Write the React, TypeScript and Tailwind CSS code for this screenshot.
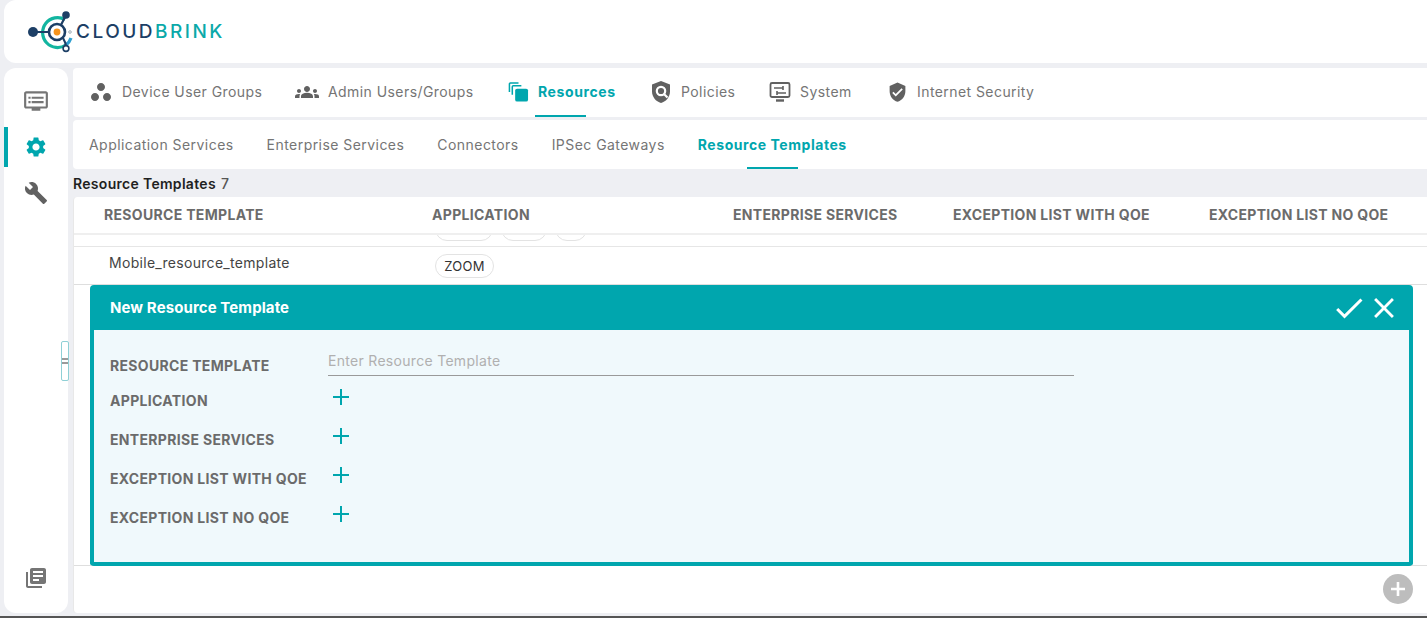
import { MdBuild, MdClose, MdCheck, MdDvr, MdGroups, MdLibraryBooks, MdSettings, MdVerifiedUser, MdWorkspaces } from 'react-icons/md'

const TEAL = '#00a6ae'

function ResourcesIcon() {
  return (
    <svg width="22" height="22" viewBox="0 0 22 22" fill="none" stroke={TEAL} strokeWidth="1.6">
      <path d="M1.5 11V2.500a1 1 0 0 1 1-1H11" />
      <path d="M4.500 14V5.500a1 1 0 0 1 1-1H14" />
      <rect x="7.500" y="7.500" width="13.500" height="13.500" rx="2" fill={TEAL} stroke="none" />
    </svg>
  )
}

function PolicyIcon() {
  return (
    <svg width="20" height="24" viewBox="0 0 20 24">
      <path fill="#616161" d="M10 1 1 4.500v7c0 5.400 3.800 10 9 11.500 5.200-1.500 9-6.100 9-11.500v-7L10 1z" />
      <circle cx="10" cy="11" r="4.200" fill="none" stroke="#fff" strokeWidth="2.200" />
      <path d="m13 14 3.500 3.500" stroke="#fff" strokeWidth="2.200" />
    </svg>
  )
}

function SystemIcon() {
  return (
    <svg width="22" height="22" viewBox="0 0 22 22" fill="none">
      <rect x="1.500" y="2" width="19" height="14" rx="1.500" stroke="#616161" strokeWidth="1.800" />
      <path d="M7 19.500h8" stroke="#616161" strokeWidth="2.400" />
      <path d="M5 7h9M14 5v4M8 12h9M8 10v4" stroke="#616161" strokeWidth="1.600" />
    </svg>
  )
}

function Logo() {
  return (
    <div className="flex items-center">
      <svg width="48" height="44" viewBox="0 0 48 44" fill="none">
        <path d="M37 9.500A15 15 0 1 0 38 35" stroke="#12b5a0" strokeWidth="3.200" />
        <path d="M38 35a15 15 0 0 0 5-7" stroke="#2f9fd0" strokeWidth="3.200" />
        <circle cx="29" cy="22" r="8" stroke="#1d3f66" strokeWidth="2.600" />
        <circle cx="29" cy="22" r="3.400" fill="#f7941d" />
        <path d="M5 22h16M33 15l5-10M35 28c2 3 3 6 3 10" stroke="#1d3f66" strokeWidth="2.200" />
        <circle cx="5" cy="22" r="5" fill="#1d3f66" />
        <circle cx="38" cy="5" r="3.800" fill="#1d3f66" />
        <circle cx="38" cy="38.500" r="2.900" fill="#fff" stroke="#1d3f66" strokeWidth="1.600" />
        <circle cx="42" cy="22" r="1.300" fill="#fff" stroke="#8a9aa8" strokeWidth="0.800" />
      </svg>
      <span className="text-[19px] font-medium tracking-[2.5px] leading-none text-[#1d3f66] font-['Inter',sans-serif]">
        CLOUD<span className="text-[#0ba9a9]">BRINK</span>
      </span>
    </div>
  )
}

const mainTabs = [
  { label: 'Device User Groups', icon: <MdWorkspaces size={24} color="#616161" />, cls: 'ml-[16px] w-[206px]', iconCls: 'w-[24px]' },
  { label: 'Admin Users/Groups', icon: <MdGroups size={26} color="#616161" />, cls: 'w-[213px]', iconCls: 'w-[24px]' },
  { label: 'Resources', icon: <ResourcesIcon />, active: true, cls: 'w-[142px]', iconCls: 'w-[21px]' },
  { label: 'Policies', icon: <PolicyIcon />, cls: 'w-[118px]', iconCls: 'w-[22px]' },
  { label: 'System', icon: <SystemIcon />, cls: 'w-[119px]', iconCls: 'w-[23px]' },
  { label: 'Internet Security', icon: <MdVerifiedUser size={22} color="#616161" />, cls: 'w-[170px]', iconCls: 'w-[21px]' },
]

const subTabs = [
  { label: 'Application Services' },
  { label: 'Enterprise Services' },
  { label: 'Connectors' },
  { label: 'IPSec Gateways' },
  { label: 'Resource Templates', active: true },
]

const gridCls = 'grid grid-cols-[328px_301px_220px_256px_1fr] pl-[30px]'
const formRows = ['APPLICATION', 'ENTERPRISE SERVICES', 'EXCEPTION LIST WITH QOE', 'EXCEPTION LIST NO QOE']

function Chip({ children, w }: { children?: string; w: string }) {
  return (
    <span className={`flex h-6 items-center justify-center rounded-full border border-[#e3e3e3] bg-white pt-[2px] text-[13px] tracking-[0.3px] text-[#333] ${w}`}>
      {children}
    </span>
  )
}

export default function App() {
  return (
    <div className="relative flex h-[618px] w-[1427px] flex-col overflow-hidden bg-[#eeeff3] font-['Inter',sans-serif]">
      <header className="ml-1 flex h-[63px] shrink-0 items-center rounded-l-xl bg-white pl-[24px]">
        <Logo />
      </header>

      <div className="mt-[5px] flex h-[545px] shrink-0">
        <aside className="ml-1 flex w-[64px] flex-col items-center rounded-xl bg-white pt-[20px] pb-[23px]">
          <MdDvr size={26} color="#757575" />
          <div className="relative mt-[21px] flex w-full justify-center">
            <span className="absolute top-[-8px] left-0 h-[40px] w-[4px] bg-[#00a6ae]" />
            <MdSettings size={24} color={TEAL} />
          </div>
          <MdBuild size={24} color="#616161" className="mt-[22px]" />
          <MdLibraryBooks size={24} color="#757575" className="mt-auto" />
          <span className="absolute top-[341px] left-[61px] flex h-[40px] w-[8px] items-center rounded-[2px] border border-[#8fd0d6] bg-white">
            <span className="h-[6px] w-full border-y-2 border-[#9a9a9a]" />
          </span>
        </aside>

        <main className="ml-[5px] flex min-w-0 flex-1 flex-col">
          <nav className="flex h-[49px] shrink-0 rounded-l bg-white text-[14px] tracking-[0.43px] text-[#757575]">
            {mainTabs.map(t => (
              <div key={t.label} className={`relative flex items-center gap-[9px] pb-[2px] ${t.cls}`}>
                <span className={`flex shrink-0 justify-center ${t.iconCls}`}>{t.icon}</span>
                <span className={t.active ? 'font-bold tracking-[0.6px] text-[#00a6ae]' : ''}>{t.label}</span>
                {t.active && <span className="absolute bottom-0 left-[27px] h-[2px] w-[51px] bg-[#00a6ae]" />}
              </div>
            ))}
          </nav>

          <nav className="mt-[3px] flex h-[49px] shrink-0 items-center gap-[33px] rounded-l bg-white pl-[16px] text-[14px] tracking-[0.45px] text-[#757575]">
            {subTabs.map(t => (
              <div key={t.label} className="relative flex h-full items-center">
                <span className={t.active ? 'font-bold tracking-[0.55px] text-[#00a6ae]' : ''}>{t.label}</span>
                {t.active && <span className="absolute bottom-0 left-[49px] h-[2px] w-[51px] bg-[#00a6ae]" />}
              </div>
            ))}
          </nav>

          <div className="flex h-[28px] shrink-0 items-center text-[14px] font-semibold tracking-[0.3px] text-[#1f1f1f]">
            Resource Templates<span className="ml-[5px] font-medium text-[#555]">7</span>
          </div>

          <section className="flex min-h-0 flex-1 flex-col rounded-l border-l border-[#e8e8e8] bg-white">
            <div className={`${gridCls} h-[38px] shrink-0 items-center border-b-2 border-[#efefef] pb-[2px] text-[14px] font-bold tracking-[0.32px] text-[#6b6b6b]`}>
              <span>RESOURCE TEMPLATE</span>
              <span>APPLICATION</span>
              <span>ENTERPRISE SERVICES</span>
              <span>EXCEPTION LIST WITH QOE</span>
              <span>EXCEPTION LIST NO QOE</span>
            </div>

            <div className="flex h-[12px] shrink-0 items-end gap-[8px] overflow-hidden border-b border-[#e6e6e6] pl-[361px]">
              <Chip w="w-[58px] mb-[5px]" />
              <Chip w="w-[46px] mb-[5px]" />
              <Chip w="w-[32px] mb-[5px]" />
            </div>

            <div className={`${gridCls} h-[38px] shrink-0 items-center border-b border-[#dedede] text-[14px] tracking-[0.3px] text-[#444]`}>
              <span className="pl-[5px] pb-[6px]">Mobile_resource_template</span>
              <span className="pl-[3px]">
                <Chip w="w-[59px]">ZOOM</Chip>
              </span>
            </div>

            <div className="h-[281px] shrink-0 border-b border-[#dedede] pl-[16px]">
              <div className="flex h-[281px] w-[1323px] flex-col overflow-hidden rounded-[4px] border-x-[4px] border-b-[4px] border-[#00a6ae] bg-[#f0f9fc]">
                <div className="-mx-[4px] flex h-[45px] shrink-0 items-center justify-between bg-[#00a6ae] pr-[12px] pl-[20px]">
                  <span className="pt-[1px] text-[15px] font-bold tracking-[0.1px] text-white">New Resource Template</span>
                  <span className="flex items-center text-white">
                    <MdCheck size={36} />
                    <MdClose size={34} />
                  </span>
                </div>
                <div className="flex items-end pt-[20px] pl-[16px]">
                  <span className="w-[218px] pb-[1px] text-[14px] font-bold leading-[18px] tracking-[0.32px] text-[#6b6b6b]">RESOURCE TEMPLATE</span>
                  <span className="w-[746px] border-b border-[#9a9a9a] pb-[4px] text-[14px] tracking-[0.3px] text-[#b0b0b0]">
                    Enter Resource Template
                  </span>
                </div>
                <div className="mt-[5px]">
                  {formRows.map(r => (
                    <div key={r} className="flex h-[39px] items-center pl-[16px]">
                      <span className="w-[218px] text-[14px] font-bold tracking-[0.32px] text-[#6b6b6b]">{r}</span>
                      <svg width="24" height="24" viewBox="0 0 24 24" stroke={TEAL} strokeWidth="2" className="-mt-[8px] ml-[1px]">
                        <path d="M12 4v16M4 12h16" />
                      </svg>
                    </div>
                  ))}
                </div>
              </div>
            </div>

            <div className="flex flex-1 items-start justify-end pt-[8px] pr-[14px]">
              <span className="flex h-[30px] w-[30px] items-center justify-center rounded-full bg-[#bdbdbd]">
                <svg width="18" height="18" viewBox="0 0 18 18" stroke="#fff" strokeWidth="2.600">
                  <path d="M9 2v14M2 9h14" />
                </svg>
              </span>
            </div>
          </section>
        </main>
      </div>
      <div className="mt-auto h-[2px] bg-[#555]" />
    </div>
  )
}
